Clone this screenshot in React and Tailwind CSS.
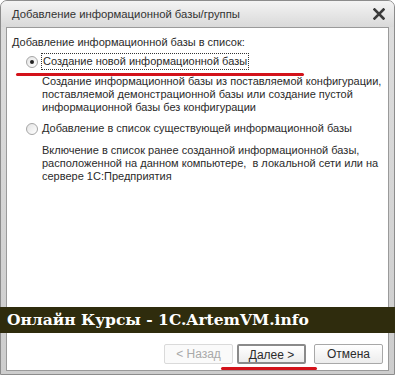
export default function App() {
  return (
    <div className="relative w-[395px] h-[375px] overflow-hidden bg-white font-['Liberation_Sans',Arial,sans-serif] text-[11px] text-[#2b2b2b]">
      <div className="flex flex-col w-full h-full rounded-t-[7px] border border-[#8c8c8c] bg-gradient-to-b from-[#dedede] to-[#cdcdcd] px-[5px] pb-[3px]">
        {/* title bar */}
        <div className="flex items-center justify-between h-[26px] -mx-[5px] pl-[11px] pr-[9px] rounded-t-[6px] bg-gradient-to-b from-[#f4f4f4] to-[#d9d9d9]">
          <span className="text-[11.3px] text-[#333]">Добавление информационной базы/группы</span>
          <svg width="12" height="12" viewBox="0 0 12 12">
            <path d="M1.5 1.5 L10.5 10.5 M10.5 1.5 L1.5 10.5" stroke="#3a3a3a" strokeWidth="2.6" strokeLinecap="square" />
          </svg>
        </div>

        {/* content */}
        <div className="flex flex-col flex-1 bg-white border border-[#9a9a9a] whitespace-nowrap">
          <div className="pl-[5px] pt-[7px] leading-[14px]">Добавление информационной базы в список:</div>

          <div className="flex items-center mt-[4px] pl-[19px] h-[17px]">
            <Radio checked />
            <span className="ml-[3px] px-[1px] leading-[15px] border border-dotted border-[#333]">Создание новой информационной базы</span>
          </div>
          <div className="mt-[5px] pl-[35px] leading-[13px]">
            Создание информационной базы из поставляемой конфигурации,<br />
            поставляемой демонстрационной базы или создание пустой<br />
            информационной базы без конфигурации
          </div>

          <div className="flex items-center mt-[6px] pl-[19px] h-[17px]">
            <Radio />
            <span className="ml-[4px] leading-[15px]">Добавление в список существующей информационной базы</span>
          </div>
          <div className="mt-[7px] pl-[35px] leading-[13px]">
            Включение в список ранее созданной информационной базы,<br />
            расположенной на данном компьютере,&nbsp; в локальной сети или на<br />
            сервере 1С:Предприятия
          </div>

          <div className="mt-auto flex justify-end gap-[4px] pr-[5px] pb-[6px] text-[12px]">
            <button className="w-[69px] h-[20px] border border-[#dadada] bg-[#fafafa] text-[#a9a9a9] rounded-[2px]">&lt; Назад</button>
            <button className="w-[69px] h-[20px] border-2 border-[#8a8a8a] bg-gradient-to-b from-white to-[#ececec] text-[#2b2b2b] rounded-[2px]">Далее &gt;</button>
            <button className="ml-[4px] w-[69px] h-[20px] border border-[#a8a8a8] bg-gradient-to-b from-white to-[#ececec] text-[#2b2b2b] rounded-[2px]">Отмена</button>
          </div>
        </div>
      </div>

      {/* watermark banner */}
      <div className="absolute left-0 right-0 top-[307px] h-[26px] bg-[#2f2c0d] flex items-center pl-[7px]">
        <span className="font-['DejaVu_Serif',serif] font-bold text-[15.5px] text-white">Онлайн Курсы - 1C.ArtemVM.info</span>
      </div>

      {/* red annotation lines */}
      <div className="absolute left-[16px] top-[73px] w-[288px] h-[3px] rounded-full bg-[#d3121a]" />
      <div className="absolute left-[221px] top-[367px] w-[96px] h-[3px] rounded-full bg-[#d3121a]" />
    </div>
  );
}

function Radio({ checked }) {
  return (
    <span className="flex items-center justify-center w-[12px] h-[12px] rounded-full border border-[#a5a5a5] bg-gradient-to-br from-[#e4e4e4] to-white">
      {checked && <span className="w-[4px] h-[4px] rounded-full bg-[#222]" />}
    </span>
  );
}
